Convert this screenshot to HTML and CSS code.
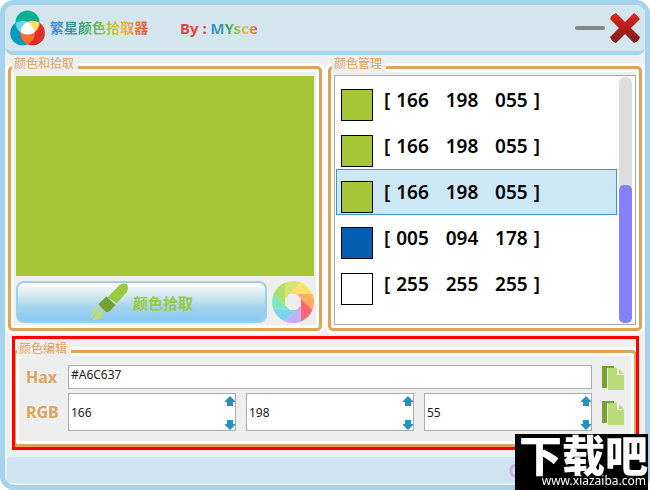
FILE: index.html
```
<!DOCTYPE html>
<html lang="zh-CN">
<head>
    <meta charset="UTF-8">
    <meta name="viewport" content="width=device-width, initial-scale=1.0">
    <title>繁星颜色拾取器</title>
    <link rel="stylesheet" href="styles.css">
</head>
<body>
    <svg width="0" height="0" class="symbols">
        <symbol id="copy" viewBox="0 0 24 26">
            <path d="M0 1H12V3H5V23H0Z" fill="#77a22f"/>
            <path d="M7 3H15V10H22V25H6V3Z" fill="#b9dc78"/>
            <path d="M17 4 22 9H17Z" fill="#b9dc78"/>
        </symbol>
        <symbol id="up" viewBox="0 0 10 10">
            <path d="M5 0 10 5V6H8V10H2V6H0V5Z" fill="#2593bd"/>
        </symbol>
    </svg>
    <div class="app">
        <header class="titlebar">
            <svg class="logo" width="36" height="36" viewBox="0 0 36 36">
                <defs>
                    <clipPath id="top"><circle cx="17.5" cy="12.5" r="12"/></clipPath>
                    <clipPath id="left"><circle cx="12.5" cy="23" r="12.3"/></clipPath>
                </defs>
                <circle cx="17.5" cy="12.5" r="12" fill="#06b096"/>
                <circle cx="12.5" cy="23" r="12.3" fill="#0399c2"/>
                <circle cx="22.7" cy="23" r="12.3" fill="#e12d30"/>
                <circle cx="12.5" cy="23" r="12.3" fill="#62d8ef" clip-path="url(#top)"/>
                <circle cx="22.7" cy="23" r="12.3" fill="#ffe05e" clip-path="url(#top)"/>
                <g clip-path="url(#left)">
                    <circle cx="22.7" cy="23" r="12.3" fill="#fb7128"/>
                    <circle cx="22.7" cy="23" r="12.3" fill="#fff" clip-path="url(#top)"/>
                </g>
            </svg>
            <h1 class="rainbow">繁星颜色拾取器</h1>
            <p class="author">By : <span class="rainbow">MYsce</span></p>
            <div class="window-buttons">
                <button type="button" aria-label="最小化">
                    <svg width="30" height="32" viewBox="0 0 30 32"><rect y="14" width="30" height="4" rx="2" fill="#858789"/></svg>
                </button>
                <button type="button" aria-label="关闭">
                    <svg width="30" height="32" viewBox="0 0 30 32">
                        <defs>
                            <linearGradient id="red" x2="0" y2="1">
                                <stop offset="0" stop-color="#e3261d"/>
                                <stop offset="1" stop-color="#7d1b1b"/>
                            </linearGradient>
                        </defs>
                        <path d="M6 1 15 10 24 1Q25 1 30 7L21 16 30 25Q29 29 24 31L15 22 6 31Q2 30 0 25L9 16 0 7Q1 3 6 1Z" fill="url(#red)"/>
                    </svg>
                </button>
            </div>
        </header>

        <main>
            <div class="columns">
                <section class="panel picker">
                    <h2>颜色和拾取</h2>
                    <div class="preview"></div>
                    <div class="actions">
                        <button type="button" class="pick">
                            <svg width="38" height="38" viewBox="0 0 38 38">
                                <path d="M17.7 14.3 29 2.5Q33 -1 37 1Q39.500 6 36 10L26.700 20.300Z" fill="#9bcb3c"/>
                                <path d="M16.500 13.500 25.500 22 20 28Q18 29.500 16 29L9 22V20.500Z" fill="#759f2e"/>
                                <path d="M7.700 24.300 13.700 30.700 11 35.500 1.500 38 7.500 31 6 30 0 36 2.500 27Z" fill="#bbdc7a"/>
                            </svg>
                            颜色拾取
                        </button>
                        <button type="button" class="wheel" aria-label="调色盘">
                            <svg width="42" height="42" viewBox="-21 -21 42 42">
                                <defs>
                                    <clipPath id="disc"><circle r="21"/></clipPath>
                                    <path id="blade" d="M8 -3.4V24H26V14.6Z"/>
                                </defs>
                                <g clip-path="url(#disc)">
                                    <use href="#blade" fill="#ff646f"/>
                                    <use href="#blade" fill="#c3b1f8" transform="rotate(45)"/>
                                    <use href="#blade" fill="#7fd3f2" transform="rotate(90)"/>
                                    <use href="#blade" fill="#80e5c4" transform="rotate(135)"/>
                                    <use href="#blade" fill="#afdf68" transform="rotate(180)"/>
                                    <use href="#blade" fill="#d6e371" transform="rotate(225)"/>
                                    <use href="#blade" fill="#ffe368" transform="rotate(270)"/>
                                    <use href="#blade" fill="#ffad67" transform="rotate(315)"/>
                                </g>
                            </svg>
                        </button>
                    </div>
                </section>

                <section class="panel manager">
                    <h2>颜色管理</h2>
                    <div class="list-box">
                        <ul class="colors">
                            <li><span class="swatch green"></span><span class="value">[ <b>166</b>   <b>198</b>   <b>055</b> ]</span></li>
                            <li><span class="swatch green"></span><span class="value">[ <b>166</b>   <b>198</b>   <b>055</b> ]</span></li>
                            <li class="selected"><span class="swatch green"></span><span class="value">[ <b>166</b>   <b>198</b>   <b>055</b> ]</span></li>
                            <li><span class="swatch blue"></span><span class="value">[ <b>005</b>   <b>094</b>   <b>178</b> ]</span></li>
                            <li><span class="swatch white"></span><span class="value">[ <b>255</b>   <b>255</b>   <b>255</b> ]</span></li>
                        </ul>
                        <div class="scrollbar"><div class="thumb"></div></div>
                    </div>
                </section>
            </div>

            <div class="highlight">
                <section class="panel editor">
                    <h2>颜色编辑</h2>
                    <div class="row">
                        <label for="hex">Hax</label>
                        <input type="text" id="hex" class="hex" value="#A6C637">
                        <button type="button" class="copy" aria-label="复制 Hax"><svg width="24" height="26"><use href="#copy"/></svg></button>
                    </div>
                    <div class="row">
                        <label for="r">RGB</label>
                        <div class="spinners">
                            <div class="spinner">
                                <input type="text" id="r" value="166">
                                <div class="steps">
                                    <button type="button" aria-label="增加"><svg width="10" height="10"><use href="#up"/></svg></button>
                                    <button type="button" class="down" aria-label="减少"><svg width="10" height="10"><use href="#up"/></svg></button>
                                </div>
                            </div>
                            <div class="spinner">
                                <input type="text" aria-label="G" value="198">
                                <div class="steps">
                                    <button type="button" aria-label="增加"><svg width="10" height="10"><use href="#up"/></svg></button>
                                    <button type="button" class="down" aria-label="减少"><svg width="10" height="10"><use href="#up"/></svg></button>
                                </div>
                            </div>
                            <div class="spinner">
                                <input type="text" aria-label="B" value="55">
                                <div class="steps">
                                    <button type="button" aria-label="增加"><svg width="10" height="10"><use href="#up"/></svg></button>
                                    <button type="button" class="down" aria-label="减少"><svg width="10" height="10"><use href="#up"/></svg></button>
                                </div>
                            </div>
                        </div>
                        <button type="button" class="copy" aria-label="复制 RGB"><svg width="24" height="26"><use href="#copy"/></svg></button>
                    </div>
                </section>
            </div>
        </main>

        <footer class="statusbar">C</footer>
    </div>

    <div class="watermark">
        <strong>下载吧</strong>
        <span>www.xiazaiba.com</span>
    </div>
</body>
</html>
```

FILE: styles.css
```
* {
    box-sizing: border-box;
}
body {
    margin: 0;
    background-color: #fff;
    font-family: "Noto Sans", "Noto Sans CJK SC", sans-serif;
}
h1, h2, p, ul {
    margin: 0;
    padding: 0;
}
button {
    padding: 0;
    border: none;
    background: none;
    cursor: pointer;
}
svg {
    display: block;
}
.app {
    display: flex;
    flex-direction: column;
    min-height: 100vh;
    border: 5px solid #a3d3ed;
    border-radius: 14px;
    background-color: #eee;
    overflow: hidden;
}

/* title bar */
.titlebar {
    display: flex;
    align-items: center;
    height: 50px;
    padding: 0 5px;
    background-color: #d3e5ed;
    border-bottom: 4px solid #a3d3ed;
    border-radius: 0 0 8px 8px;
}
.titlebar h1 {
    margin-left: 4px;
    font-size: 14px;
    font-weight: bold;
    line-height: 20px;
}
.rainbow {
    background: linear-gradient(to right, #4286f0, #35a56b 35%, #a9c83e 60%, #f5b632 75%, #ed4638);
    -webkit-background-clip: text;
    background-clip: text;
    color: transparent;
}
.author {
    margin-left: 32px;
    font-size: 15px;
    font-weight: bold;
    line-height: 20px;
    color: #e9433d;
}
.window-buttons {
    display: flex;
    gap: 5px;
    margin-left: auto;
}

/* panels */
main {
    display: flex;
    flex-direction: column;
    flex: 1;
    padding: 11px 3px 7px;
}
.columns {
    display: grid;
    grid-template-columns: 1fr 1fr;
    gap: 6px;
    flex: 1;
}
.panel {
    position: relative;
    border: 3px solid #dda45b;
    border-radius: 5px;
    box-shadow: 0 0 0 3px #fff, inset 0 0 0 3px #fff;
}
.panel h2 {
    position: absolute; /* sits over the border like a legend */
    top: -13px;
    left: 1px;
    padding: 0 4px 0 2px;
    background-color: #eee;
    color: #dda45b;
    font-size: 12px;
    font-weight: normal;
    line-height: 16px;
}
.picker {
    display: flex;
    flex-direction: column;
    gap: 5px;
    padding: 7px 5px 5px;
}
.preview {
    flex: 1;
    background-color: #a6c637;
}
.actions {
    display: flex;
    gap: 5px;
}
.pick {
    display: flex;
    flex: 1;
    align-items: center;
    justify-content: center;
    gap: 5px;
    height: 42px;
    border: 2px solid #9ccfe9;
    border-radius: 8px;
    background: linear-gradient(#fff, #dbecf1 28%, #a6d4ea 62%, #87caf6);
    color: #97c93d;
    font-family: inherit;
    font-size: 15px;
    font-weight: bold;
}
.manager {
    display: flex;
    padding: 6px 3px 3px;
}
.list-box {
    display: flex;
    flex: 1;
    gap: 2px;
    padding: 1px 3px 1px 1px;
    border: 1px solid #aaaab2;
    background-color: #fff;
}
.colors {
    flex: 1;
    list-style: none;
}
.colors li {
    display: flex;
    align-items: flex-end;
    gap: 11px;
    height: 46px;
    padding: 0 4px 1px;
    border: 1px solid transparent;
}
.colors .selected {
    background-color: #cce8f6;
    border-color: #3399d5;
}
.swatch {
    width: 32px;
    height: 32px;
    border: 1px solid #000;
}
.green {
    background-color: #a6c637;
}
.blue {
    background-color: #055eb2;
}
.white {
    background-color: #fff;
}
.value {
    padding-bottom: 9px;
    font-size: 19px;
    font-weight: 600;
    line-height: 24px;
    color: #000;
    white-space: pre;
}
.value b {
    padding: 0 1px;
    font-weight: inherit;
}
.scrollbar {
    display: flex;
    flex-direction: column;
    justify-content: flex-end;
    width: 13px;
    border-radius: 6px;
    background-color: #ddd;
}
.thumb {
    height: 56%;
    border-radius: 5px;
    background-color: #8482fa;
}

/* editor */
.symbols {
    position: absolute;
}
.highlight {
    margin: 5px 3px 0 4px;
    padding-top: 11px;
    border: 3px solid #f00;
    overflow: hidden;
}
.editor {
    display: flex;
    flex-direction: column;
    gap: 4px;
    margin: 0 -1px 0 -2px;
    padding: 12px 8px 13px 10px;
}
.editor h2 {
    top: -12px;
}
.row {
    display: flex;
    align-items: center;
    gap: 10px;
}
.row label {
    width: 32px;
    color: #dda45b;
    font-size: 16px;
    font-weight: bold;
    line-height: 20px;
}
.row input {
    flex: 1;
    min-width: 0;
    padding: 0 2px;
    border: 1px solid #aaaab2;
    background-color: #fff;
    color: #222;
    font-family: inherit;
    font-size: 12px;
}
.row .hex {
    height: 24px;
    padding-bottom: 6px;
}
.copy {
    height: 24px;
}
.spinners {
    display: grid;
    grid-template-columns: repeat(3, minmax(0, 1fr));
    gap: 10px;
    flex: 1;
}
.spinner {
    display: flex;
    height: 38px;
    border: 1px solid #aaaab2;
    background-color: #fff;
}
.spinner input {
    border: none;
}
.steps {
    display: flex;
    flex-direction: column;
    justify-content: space-between;
    padding: 2px 0 0;
}
.down {
    transform: rotate(180deg);
}

/* status bar */
.statusbar {
    height: 26px;
    margin: 0 2px 2px;
    padding-right: 123px;
    border-radius: 3px;
    background-color: #cfe4f2;
    color: #cdaeea;
    font-size: 18px;
    font-weight: bold;
    line-height: 26px;
    text-align: right;
}
.watermark {
    position: fixed;
    right: 2px;
    bottom: 0;
    display: flex;
    flex-direction: column;
    align-items: flex-end;
    width: 133px;
    height: 56px;
    background-color: #000;
    color: #fff;
}
.watermark strong {
    font-family: "Noto Sans CJK SC", sans-serif;
    font-size: 43px;
    font-weight: 900;
    line-height: 38px;
}
.watermark span {
    padding-right: 2px;
    font-size: 12px;
    line-height: 18px;
}
```
